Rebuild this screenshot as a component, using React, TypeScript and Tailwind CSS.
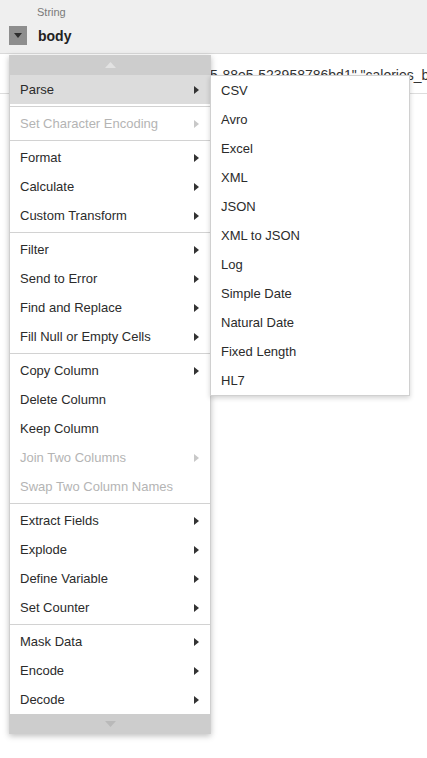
import React from "react";

type Item = { label: string; arrow?: boolean; disabled?: boolean; active?: boolean };

const groups: Item[][] = [
  [{ label: "Parse", arrow: true, active: true }],
  [{ label: "Set Character Encoding", arrow: true, disabled: true }],
  [
    { label: "Format", arrow: true },
    { label: "Calculate", arrow: true },
    { label: "Custom Transform", arrow: true },
  ],
  [
    { label: "Filter", arrow: true },
    { label: "Send to Error", arrow: true },
    { label: "Find and Replace", arrow: true },
    { label: "Fill Null or Empty Cells", arrow: true },
  ],
  [
    { label: "Copy Column", arrow: true },
    { label: "Delete Column" },
    { label: "Keep Column" },
    { label: "Join Two Columns", arrow: true, disabled: true },
    { label: "Swap Two Column Names", disabled: true },
  ],
  [
    { label: "Extract Fields", arrow: true },
    { label: "Explode", arrow: true },
    { label: "Define Variable", arrow: true },
    { label: "Set Counter", arrow: true },
  ],
  [
    { label: "Mask Data", arrow: true },
    { label: "Encode", arrow: true },
    { label: "Decode", arrow: true },
  ],
];

const sub = ["CSV", "Avro", "Excel", "XML", "JSON", "XML to JSON", "Log", "Simple Date", "Natural Date", "Fixed Length", "HL7"];

function Arrow({ disabled }: { disabled?: boolean }) {
  return (
    <svg width="5" height="8" viewBox="0 0 5 8" className="mr-[11px]">
      <path d="M0 0 L5 4 L0 8 Z" fill={disabled ? "#c8c8c8" : "#333333"} />
    </svg>
  );
}

export default function App() {
  return (
    <div className="w-[427px] h-[758px] bg-white overflow-hidden text-[13px]" style={{ fontFamily: '"Liberation Sans", Arial, sans-serif' }}>
      <div className="h-[54px] bg-[#efefef] border-b border-[#d9d9d9] flex flex-col pl-[9px] pt-[5px]">
        <div className="pl-[28px] text-[11px] leading-[14px] text-[#7a7a7a]">String</div>
        <div className="mt-[7px] flex items-center gap-[11px]">
          <div className="w-[18px] h-[19px] bg-[#8e8e8e] flex items-center justify-center">
            <svg width="8" height="5" viewBox="0 0 8 5">
              <path d="M0 0 L8 0 L4 5 Z" fill="#2e2e2e" />
            </svg>
          </div>
          <div className="text-[14px] font-bold text-[#222] leading-none">body</div>
        </div>
      </div>
      <div className="relative h-[704px]">
        <div className="flex flex-col">
          <div className="h-[40px] border-b border-[#dddddd] flex items-center pt-[2px]">
            <div className="ml-[8px] w-px h-[14px] bg-[#e3b46a]" />
            <div className="ml-[202px] whitespace-nowrap text-[14px] text-[#333] leading-none">5-88e5-523958786bd1" "calories_b</div>
          </div>
        </div>

        <div className="absolute left-[9px] top-px w-[202px] bg-white border-x border-[#cfcfcf] shadow-[0_2px_6px_rgba(0,0,0,0.25)]">
          <div className="h-[20px] bg-[#cdcdcd] flex items-center justify-center">
            <svg width="11" height="6" viewBox="0 0 11 6">
              <path d="M0 6 L5.5 0 L11 6 Z" fill="#e2e2e2" />
            </svg>
          </div>
          {groups.map((g, gi) => (
            <div key={gi}>
              {gi > 0 && <div className="my-[2px] h-px bg-[#d2d2d2]" />}
              {g.map((it) => (
                <div
                  key={it.label}
                  className={`h-[29px] flex items-center justify-between pl-[10px] ${it.active ? "bg-[#dcdcdc]" : ""} ${it.disabled ? "text-[#b4b4b4]" : "text-[#2b2b2b]"}`}
                >
                  <span>{it.label}</span>
                  {it.arrow && <Arrow disabled={it.disabled} />}
                </div>
              ))}
            </div>
          ))}
          <div className="h-[20px] bg-[#cdcdcd] flex items-center justify-center">
            <svg width="11" height="6" viewBox="0 0 11 6">
              <path d="M0 0 L11 0 L5.5 6 Z" fill="#b9b9b9" />
            </svg>
          </div>
        </div>

        <div className="absolute left-[210px] top-[21px] w-[200px] bg-white border border-[#d0d0d0] shadow-[0_2px_5px_rgba(0,0,0,0.18)]">
          {sub.map((s) => (
            <div key={s} className="h-[29px] flex items-center pl-[10px] text-[#2b2b2b]">
              {s}
            </div>
          ))}
        </div>
      </div>
    </div>
  );
}
